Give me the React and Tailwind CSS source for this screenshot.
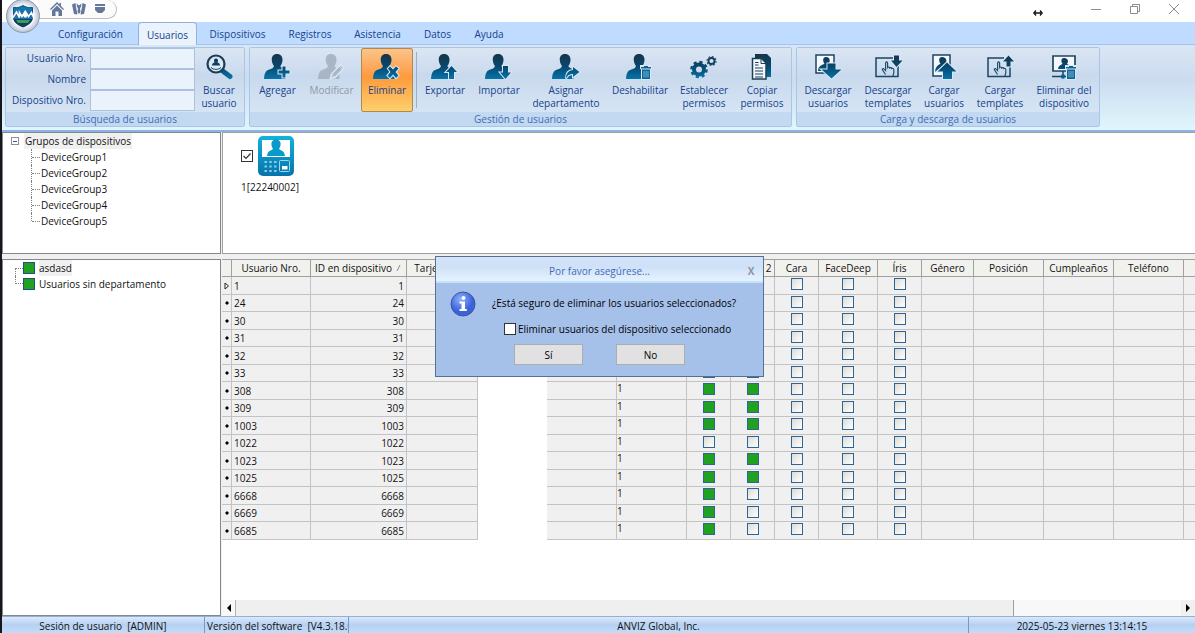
import { useState } from 'react';

const TABS = [
  { label: 'Configuración', width: 'w-[95px]' },
  { label: 'Usuarios', width: 'w-[59px]' },
  { label: 'Dispositivos', width: 'w-[81px]' },
  { label: 'Registros', width: 'w-[64px]' },
  { label: 'Asistencia', width: 'w-[71px]' },
  { label: 'Datos', width: 'w-[49px]' },
  { label: 'Ayuda', width: 'w-[54px]' },
];

const MANAGE_ACTIONS = [
  { label: 'Exportar', icon: 'export', width: 'w-[54px]' },
  { label: 'Importar', icon: 'import', width: 'w-[54px]' },
  { label: 'Asignar departamento', icon: 'assign', width: 'w-[80px]' },
  { label: 'Deshabilitar', icon: 'disable', width: 'w-[68px]' },
  { label: 'Establecer permisos', icon: 'gears', width: 'w-[60px]' },
  { label: 'Copiar permisos', icon: 'copy', width: 'w-[56px]' },
];

const TRANSFER_ACTIONS = [
  { label: 'Descargar usuarios', icon: 'downUser', width: 'w-[60px]' },
  { label: 'Descargar templates', icon: 'downTemplate', width: 'w-[60px]' },
  { label: 'Cargar usuarios', icon: 'upUser', width: 'w-[52px]' },
  { label: 'Cargar templates', icon: 'upTemplate', width: 'w-[60px]' },
  { label: 'Eliminar del dispositivo', icon: 'deleteDevice', width: 'w-[68px]' },
];

const GROUPS = ['DeviceGroup1', 'DeviceGroup2', 'DeviceGroup3', 'DeviceGroup4', 'DeviceGroup5'];

const COLUMNS = [
  { label: '', width: 'w-[10px]' },
  { label: 'Usuario Nro.', width: 'w-[79px]' },
  { label: 'ID en dispositivo', width: 'w-[96px]', sorted: true },
  { label: 'Tarjeta Nro.', width: 'w-[71px]' },
  { label: '', width: 'w-[69px]' },
  { label: '', width: 'w-[70px]' },
  { label: '', width: 'w-[70px]' },
  { label: '', width: 'w-[44px]' },
  { label: 'Huella 2', width: 'w-[44px]' },
  { label: 'Cara', width: 'w-[44px]' },
  { label: 'FaceDeep', width: 'w-[59px]' },
  { label: 'Íris', width: 'w-[44px]' },
  { label: 'Género', width: 'w-[52px]' },
  { label: 'Posición', width: 'w-[70px]' },
  { label: 'Cumpleaños', width: 'w-[70px]' },
  { label: 'Teléfono', width: 'w-[70px]' },
  { label: '', width: '' },
];

const USERS = [
  { id: 1, fp: [false, false] },
  { id: 24, fp: [false, false] },
  { id: 30, fp: [false, false] },
  { id: 31, fp: [false, false] },
  { id: 32, fp: [false, false] },
  { id: 33, fp: [false, false] },
  { id: 308, fp: [true, true] },
  { id: 309, fp: [true, true] },
  { id: 1003, fp: [true, true] },
  { id: 1022, fp: [false, false] },
  { id: 1023, fp: [true, true] },
  { id: 1025, fp: [true, true] },
  { id: 6668, fp: [true, false] },
  { id: 6669, fp: [true, false] },
  { id: 6685, fp: [true, false] },
];

const PERSON = 'M15 1c-3.6 0-5.6 2.700-5.200 6.200.3 2.800 1.200 4.600 2.200 5.800-.4 1.600-1.500 2.500-4 3.200C4.500 17.200 2.500 18.500 2 26h21.500V16.200c-3.300-.9-4.600-1.600-5.200-3.200 1.200-1.400 2-3.300 2.200-5.800C20.800 3.700 18.700 1 15 1z';

const Trash = ({ x, y }) => (
  <g transform={`translate(${x} ${y})`}>
    <path d="M-1 -1h12v4h-1v11H0V3h-1z" fill="#dbe7f5" />
    <path d="M0 1h3V0h4v1h3v1.500H0zM1 3.500h8V13H1z" fill="#0a6596" />
    <path d="M3 5v6.500M5 5v6.500M7 5v6.500" stroke="#9fc6df" strokeWidth=".8" />
  </g>
);

const Badge = ({ d }) => <path d={d} fill="url(#ink)" stroke="#dbe7f5" strokeWidth="2" paintOrder="stroke" />;

const Hand = () => (
  <path
    d="M13.500 21.500 10.500 17c-.6-1 .7-1.800 1.600-.9l1.500 1.500V10c0-1.500 2-1.500 2 0v4.500c.6-.8 2-.6 2.100.5.7-.7 2-.4 2.100.6.800-.5 2-.1 2 1v3l-.8 3.500"
    fill="none"
    stroke="#1d4f6e"
    strokeWidth="1.200"
  />
);

const Gear = ({ cx, cy, r, width, teeth }) => (
  <g fill="none" stroke="url(#ink)">
    <circle cx={cx} cy={cy} r={r} strokeWidth={width} />
    <circle cx={cx} cy={cy} r={r + width / 2 + 0.6} strokeWidth={width * 0.6} strokeDasharray={teeth} />
  </g>
);

const ICONS = {
  add: <><path d={PERSON} /><Badge d="M20.500 13.500h3V17.500h4v3h-4v4h-3v-4h-4v-3h4z" /></>,
  edit: (
    <g fill="#a9b6c6">
      <path d={PERSON} fill="#a9b6c6" />
      <path d="M14.500 25.500l1-4.500 9-9.500 3.500 3.500-9 9.500z" stroke="#dbe7f5" strokeWidth="1.500" />
      <path d="M16 21.500l3 3M23 13l3.500 3.500" stroke="#dbe7f5" />
    </g>
  ),
  remove: <><path d={PERSON} /><Badge d="M17 15.500l2-2 3 3 3-3 2.500 2-3 3.500 3 3.500-2.500 2.500-3-3.500-3 3.500-2.500-2.500 3-3.500z" /></>,
  export: <><path d={PERSON} /><Badge d="M22.500 13l5.500 6h-3v7h-5v-7h-3z" /></>,
  import: <><path d={PERSON} /><Badge d="M20 13h5v6.500h3L22.500 26 17 19.500h3z" /></>,
  assign: <><path d={PERSON} /><Badge d="M23 14l6.500 5-6.500 5v-3c-3.500 0-5.500 1.300-7 4.500 0-5 2.500-8.300 7-8.500z" /></>,
  disable: <><path d={PERSON} /><Trash x={17} y={13} /></>,
  gears: (
    <>
      <Gear cx={11} cy={16.5} r={5} width={4} teeth="3.100 2.900" />
      <Gear cx={23.500} cy={8} r={3} width={1.800} teeth="1.800 1.700" />
    </>
  ),
  copy: (
    <>
      <path d="M9 1h12l4 4v19H9z" />
      <path d="M6.500 5.500h9l4.500 4.500v16H6.500z" fill="#f4f8fc" stroke="#1b3f57" strokeWidth="1.500" />
      <path d="M15 5.500v5h5M9 15h8M9 18h8M9 21h8M9 24h8M9 9.500h3.500M9 12h3.500" fill="none" stroke="#1b3f57" />
    </>
  ),
  downUser: (
    <>
      <path d="M4 2h18v18H4z" fill="#f4f8fc" stroke="#1b4661" strokeWidth="1.500" />
      <path d="M14 4c-2 0-3 1.500-2.800 3.500.1 1.500.8 2.500 1.300 3C11.500 12 6.500 11.500 6 18h9v-7l2-1c.4-.8.7-1.800.7-2.500C17.700 5.500 16.500 4 14 4z" />
      <Badge d="M15.500 10.500h8V16.500h6L19.500 25.500 9.500 16.500h6z" />
    </>
  ),
  downTemplate: (
    <>
      <path d="M21 5H4v18.500h22V12" fill="none" stroke="#1b4661" strokeWidth="1.500" />
      <Hand />
      <Badge d="M22 2.500h5v5h3.500L24.500 14 19 7.500h3z" />
    </>
  ),
  upUser: (
    <>
      <path d="M5 2h17v21H5z" fill="#f4f8fc" stroke="#1b4661" strokeWidth="1.500" />
      <path d="M14 4c-2 0-3 1.500-2.800 3.500.1 1.500.8 2.500 1.300 3C11.500 12 7.500 12 7 19l11-9c.4-.8.4-1.800.4-2.500C18.200 5.500 16.500 4 14 4z" />
      <Badge d="M19 9.500l9.500 9H24V26h-9v-7.500H9.500z" />
    </>
  ),
  upTemplate: (
    <>
      <path d="M20 5H4v18.500h22V14" fill="none" stroke="#1b4661" strokeWidth="1.500" />
      <Hand />
      <Badge d="M24.500 2.500l5.500 6h-3.500V13.500h-4V8.500H19z" />
    </>
  ),
  deleteDevice: (
    <>
      <path d="M5 3h22v15H5z" fill="#f4f8fc" stroke="#1b4661" strokeWidth="1.700" />
      <path d="M16 5c-2 0-3 1.500-2.500 3.500.2 1 .5 1.500 1 2.200-1 1.300-4 1.300-4.500 5.300h13c0-4-3-4-4-5.300.6-.7.800-1.200 1-2.200C20.300 6.500 18 5 16 5z" />
      <path d="M4 23.500h15M15 18v4" fill="none" stroke="#1b4661" strokeWidth="1.500" />
      <circle cx="15" cy="23.500" r="2.200" fill="#0b5f8e" />
      <Trash x={18} y={13} />
    </>
  ),
};

const RibbonIcon = ({ name }) => (
  <svg viewBox="0 0 32 28" className="h-7 w-8 shrink-0" fill="url(#ink)" aria-hidden="true">
    {ICONS[name]}
  </svg>
);

const RibbonButton = ({ label, icon, width, active, disabled }) => (
  <button
    type="button"
    disabled={disabled}
    className={`flex h-16 flex-col items-center gap-[3px] rounded-xs border pt-1 leading-[13px] ${width} ${
      active
        ? 'mx-0.5 border-[#b08a4a] bg-linear-to-b from-[#fbc38a] via-[#fd9a3c] via-45% to-[#fdd06c]'
        : 'border-transparent'
    } ${disabled ? 'text-[#9298a3]' : 'text-[#15428b]'}`}
  >
    <RibbonIcon name={icon} />
    <span>{label}</span>
  </button>
);

const RibbonGroup = ({ title, children }) => (
  <section className="flex flex-col rounded-xs border border-[#a9c6e6] bg-linear-to-b from-[#dbe6f4] via-[#c9d9ed] via-35% to-[#dae9f7]">
    <div className="flex h-16 px-px">{children}</div>
    <h2 className="bg-[#c2d9f1] text-center leading-[14px] text-[#3f6cb5]">{title}</h2>
  </section>
);

const Logo = () => (
  <svg viewBox="0 0 36 36" className="absolute top-0 left-[3px] z-10 h-9 w-9" aria-hidden="true">
    <circle cx="18" cy="16" r="16.500" fill="url(#orb)" stroke="#8e9aab" />
    <path d="M8.500 7.500c4 .5 7-.5 9.500-2 2.500 1.500 5.500 2.500 9.500 2V17c0 5-4.500 8-9.500 10-5-2-9.500-5-9.500-10z" fill="#1774ae" stroke="#0d5587" />
    <path d="M8.500 19h19c-1 4-5 6.500-9.500 8-4.500-1.500-8.500-4-9.500-8z" fill="#163d60" />
    <path d="M8 17.500l3.500-5.500 3 5.500v-5l2.500 4 2.500-4v5M21 17.500v-5l2.500 4 3-4 2 5" fill="none" stroke="#fff" strokeWidth="1.600" />
    <path d="M11 20h14l-2 3H13z" fill="#35a05a" />
  </svg>
);

const TitleBar = () => (
  <header className="relative flex h-[22px] items-start bg-white">
    <div className="ml-9 flex h-[19px] w-[79px] items-center gap-2 rounded-r-full border border-t-0 border-l-0 border-[#b9bdc4] bg-[#fbfbfc] pl-3">
      <button type="button" aria-label="Inicio">
        <svg viewBox="0 0 14 14" className="h-3.5 w-3.5" fill="#637798">
          <path d="M7 0L0 7l1 1 6-6 6 6 1-1-3-3V1H9.500v1.500zM7 3.500l-5 5V14h3.500V9.500h3V14H12V8.500z" />
        </svg>
      </button>
      <button type="button" aria-label="Asistencia">
        <svg viewBox="0 0 14 14" className="h-3.5 w-3.5" fill="#637798">
          <path d="M0 2.500L3.500 1 4 5l1.500 7.500L2 12zM14 2.500L10.500 1 10 5l-1.500 7.500L12 12zM4.500 1.500L7 3.500l2.500-2L9 5l-1 1 .5 4L7 12l-1.500-2L6 6 5 5z" />
        </svg>
      </button>
      <button type="button" aria-label="Personalizar">
        <svg viewBox="0 0 12 12" className="h-3 w-3" fill="#637798">
          <path d="M1 1h10v2H1zM1 4h10v3L8 10H4L1 7z" />
        </svg>
      </button>
    </div>
    <svg viewBox="0 0 10 8" className="mt-[9px] ml-auto h-2 w-2.5" aria-hidden="true">
      <path d="M2 4h6M3 1.500L.8 4 3 6.500M7 1.500L9.200 4 7 6.500" fill="none" stroke="#111" strokeWidth="1.300" />
    </svg>
    <div className="mt-1 mr-4 ml-12 flex gap-[29px] text-[#8c8c8c]">
      <button type="button" aria-label="Minimizar">
        <svg viewBox="0 0 10 10" className="h-2.5 w-2.5" stroke="currentColor"><path d="M0 5.500h10" /></svg>
      </button>
      <button type="button" aria-label="Restaurar">
        <svg viewBox="0 0 10 10" className="h-2.5 w-2.5" fill="none" stroke="currentColor">
          <path d="M.5 2.500h7v7h-7zM2.500 2.500v-2h7v7h-2" />
        </svg>
      </button>
      <button type="button" aria-label="Cerrar">
        <svg viewBox="0 0 10 10" className="h-2.5 w-2.5" stroke="currentColor"><path d="M0 0l10 10M10 0L0 10" /></svg>
      </button>
    </div>
  </header>
);

const SearchField = ({ id, label }) => (
  <>
    <label htmlFor={id} className="text-right leading-5 text-[#15428b]">{label}</label>
    <input id={id} type="text" className="h-[21px] w-[105px] border border-[#abc1de] bg-[#eaf2fb] px-1 text-[#15428b] outline-none" />
  </>
);

const Ribbon = () => (
  <div className="flex gap-1 border-b-2 border-[#8db2e3] bg-linear-to-b from-[#dbe6f4] via-[#cbdcf0] via-40% to-[#e0f6fd] px-[3px] pt-0.5 pb-[3px]">
    <RibbonGroup title="Búsqueda de usuarios">
      <div className="grid grid-cols-[79px_105px] content-start gap-x-1">
        <SearchField id="user-no" label="Usuario Nro." />
        <SearchField id="user-name" label="Nombre" />
        <SearchField id="device-no" label="Dispositivo Nro." />
      </div>
      <button type="button" className="flex w-12 flex-col items-center gap-[3px] pt-[5px] leading-[13px] text-[#15428b]">
        <svg viewBox="0 0 28 28" className="h-7 w-7" fill="none" aria-hidden="true">
          <path d="M17 17.500l8 6" stroke="url(#ink)" strokeWidth="5" strokeLinecap="round" />
          <circle cx="11" cy="11" r="8.500" fill="#dce8f5" stroke="#173f58" strokeWidth="2.200" />
          <path d="M11 5.500c-2 0-2.500 2-1.500 4-2 .5-2.500 1.500-2.500 3h8c0-1.500-.5-2.500-2.500-3 1-2 .5-4-1.500-4z" fill="url(#ink)" />
          <path d="M6 14.500c2.500 2.500 7.500 2.500 10 0" stroke="#173f58" />
        </svg>
        <span>Buscar usuario</span>
      </button>
    </RibbonGroup>
    <RibbonGroup title="Gestión de usuarios">
      <RibbonButton label="Agregar" icon="add" width="w-[53px]" />
      <RibbonButton label="Modificar" icon="edit" width="w-[55px]" disabled />
      <RibbonButton label="Eliminar" icon="remove" width="w-[52px]" active />
      <span className="mx-px my-1 w-px bg-[#9aaec8]" />
      {MANAGE_ACTIONS.map((action) => <RibbonButton key={action.label} {...action} />)}
    </RibbonGroup>
    <RibbonGroup title="Carga y descarga de usuarios">
      {TRANSFER_ACTIONS.map((action) => <RibbonButton key={action.label} {...action} />)}
    </RibbonGroup>
  </div>
);

const DeviceTree = () => (
  <div className="h-[122px] border border-[#828790] bg-white pl-2">
    <div className="flex h-4 items-center gap-[5px]">
      <button type="button" aria-label="Contraer" className="flex h-2 w-2 items-center justify-center border border-[#919191]">
        <span className="h-px w-1 bg-[#3b5a9a]" />
      </button>
      <span className="bg-[#f0f0f0] px-px leading-4">Grupos de dispositivos</span>
    </div>
    <ul className="pl-5">
      {GROUPS.map((group) => (
        <li key={group} className="group flex h-4 items-center">
          <span className="h-full w-px border-l border-dotted border-[#808080] group-last:h-2 group-last:self-start" />
          <span className="mr-px w-2 border-t border-dotted border-[#808080]" />
          {group}
        </li>
      ))}
    </ul>
  </div>
);

const DepartmentTree = () => (
  <ul className="flex-1 border border-[#828790] bg-white">
    {['asdasd', 'Usuarios sin departamento'].map((name, i) => (
      <li key={name} className="flex h-4 items-center pl-3">
        <span className={`h-2 w-2 border-l border-dotted border-[#808080] ${i === 0 ? 'self-end border-t' : 'self-start border-b'}`} />
        <span className="mr-1 h-3 w-3 border border-[#1c5180] bg-[#21a121]" />
        <span className={i === 0 ? 'bg-[#f0f0f0] leading-4' : 'leading-4'}>{name}</span>
      </li>
    ))}
  </ul>
);

const DevicePanel = () => {
  const [checked, setChecked] = useState(true);
  return (
    <div className="h-[122px] border border-r-0 border-[#a0a0a0] bg-white pt-0.5 pl-[18px]">
      <label className="inline-flex flex-col">
        <span className="flex items-center gap-1">
          <span className="grid h-3 w-3 place-items-center">
            <input
              type="checkbox"
              checked={checked}
              onChange={(e) => setChecked(e.target.checked)}
              className="col-start-1 row-start-1 h-3 w-3 appearance-none border border-[#333] bg-white"
            />
            {checked && (
              <svg viewBox="0 0 12 12" className="pointer-events-none col-start-1 row-start-1 h-3 w-3">
                <path d="M2.500 6l2.500 2.500 4.500-5" fill="none" stroke="#333" strokeWidth="1.200" />
              </svg>
            )}
          </span>
          <svg viewBox="0 0 38 42" className="h-[42px] w-[38px]" aria-hidden="true">
            <rect x="1" y="1" width="36" height="40" rx="5" fill="url(#device)" />
            <path d="M5 5h28v17H5z" fill="#fff" />
            <path d="M19 4.500c-3.500 0-5 2.500-4.500 5.500.2 1.800.8 2.800 1.500 3.700-1.500 2-5.500 1.500-6 7.300h18c-.5-5.800-4.500-5.300-6-7.300.7-.9 1.300-1.900 1.500-3.700.5-3-1-5.500-4.500-5.500z" fill="#0a9ac9" />
            <path d="M7.500 27h12M7.500 31.500h12M7.500 36h12" stroke="#8fcde6" strokeWidth="2.200" strokeDasharray="2.400 2.400" />
            <rect x="22.500" y="25.500" width="10" height="11" rx="1" fill="none" stroke="#9ed8ee" />
            <path d="M25 31h5.500v3.500H25z" fill="#fff" />
          </svg>
        </span>
        <span className="pt-0.5 leading-4">1[22240002]</span>
      </label>
    </div>
  );
};

const Box = ({ checked = false, label }) => (
  <input
    type="checkbox"
    defaultChecked={checked}
    aria-label={label}
    className="mx-auto mt-px block h-3 w-3 appearance-none border border-[#2f6494] bg-linear-to-br from-[#dcdcd6] to-white checked:bg-[#21a121] checked:bg-none"
  />
);

const cell = 'border-r border-b border-[#c3c3c3] p-0';

const UserTable = () => (
  <table className="w-full table-fixed border-separate border-spacing-0">
    <thead>
      <tr className="h-[17px] bg-[#f1f1ee]">
        {COLUMNS.map(({ label, width, sorted }, i) => (
          <th key={i} scope="col" className={`overflow-hidden border-r border-b border-[#a0a0a0] p-0 font-normal whitespace-nowrap last:border-r-0 ${width}`}>
            <span className="flex items-center justify-center gap-1 leading-4">
              {label}
              {sorted && (
                <svg viewBox="0 0 6 6" className="h-1.5 w-1.5"><path d="M1 6l3-6" stroke="#888" /></svg>
              )}
            </span>
          </th>
        ))}
      </tr>
    </thead>
    <tbody>
      {USERS.map(({ id, fp }, i) => (
        <tr key={id} className="h-[17px] bg-[#f0f0f0] leading-4 odd:h-[18px]">
          <td className={`${cell} text-center`}>
            <svg viewBox="0 0 8 8" className="mx-auto h-2 w-2">
              {i === 0
                ? <path d="M2 1l3.500 3L2 7z" fill="#fff" stroke="#222" />
                : <path d="M4 2l2 2-2 2-2-2z" fill="#000" />}
            </svg>
          </td>
          <td className={`${cell} pl-0.5`}>{id}</td>
          <td className={`${cell} pr-0.5 text-right`}>{id}</td>
          <td className={cell} />
          <td className="bg-white p-0" />
          <td className={cell} />
          <td className={`${cell} align-top leading-[13px]`}>1</td>
          <td className={`${cell} align-top`}><Box checked={fp[0]} label={`Huella 1, ${id}`} /></td>
          <td className={`${cell} align-top`}><Box checked={fp[1]} label={`Huella 2, ${id}`} /></td>
          <td className={`${cell} align-top`}><Box label={`Cara, ${id}`} /></td>
          <td className={`${cell} align-top`}><Box label={`FaceDeep, ${id}`} /></td>
          <td className={`${cell} align-top`}><Box label={`Íris, ${id}`} /></td>
          <td className={cell} />
          <td className={cell} />
          <td className={cell} />
          <td className={cell} />
          <td className="border-b border-[#c3c3c3] p-0" />
        </tr>
      ))}
    </tbody>
  </table>
);

const ScrollBar = () => (
  <div className="mt-auto flex h-4 bg-[#f8f8f8]">
    <button type="button" aria-label="Desplazar a la izquierda" className="flex w-3.5 items-center justify-center border-r border-[#b5b5b5]">
      <svg viewBox="0 0 6 8" className="h-2 w-1.5"><path d="M5 0v8L1 4z" /></svg>
    </button>
    <div className="w-4/5 border-r border-[#a0a0a0] bg-[#efefef]" />
    <button type="button" aria-label="Desplazar a la derecha" className="ml-auto flex w-3.5 items-center justify-center bg-[#f0f0f0]">
      <svg viewBox="0 0 6 8" className="h-2 w-1.5"><path d="M1 0v8l4-4z" /></svg>
    </button>
  </div>
);

const ConfirmDialog = ({ onClose }) => (
  <div className="fixed inset-0 flex items-center justify-center pl-1">
    <div role="dialog" aria-labelledby="dialog-title" className="w-[329px] border border-[#5a6f94] bg-[#a5c1ea]">
      <div className="flex h-[26px] items-center border-b-2 border-[#c3e2fb] bg-linear-to-b from-[#d3e3f8] via-[#cfe1f8] via-40% to-[#e6f2fe] pt-1">
        <h2 id="dialog-title" className="flex-1 pl-6 text-center text-[#3f6cb5]">Por favor asegúrese...</h2>
        <button type="button" aria-label="Cerrar" onClick={onClose} className="w-6 font-bold text-[#8e949e]">X</button>
      </div>
      <div className="flex gap-4 pt-2 pb-[11px] pl-3.5 leading-4 text-black">
        <svg viewBox="0 0 26 26" className="h-[26px] w-[26px] shrink-0" aria-hidden="true">
          <circle cx="13" cy="13" r="12" fill="url(#info)" stroke="#3a55a8" />
          <circle cx="13.500" cy="7" r="2" fill="#fff" />
          <path d="M9.500 10.500H15V18h1.800v2H9.500v-2h2v-5.500h-2z" fill="#fff" />
        </svg>
        <div className="pt-1">
          <p>¿Está seguro de eliminar los usuarios seleccionados?</p>
          <label className="mt-2.5 ml-3 flex items-center gap-0.5">
            <input type="checkbox" className="h-3 w-3 appearance-none border border-[#333] bg-white" />
            Eliminar usuarios del dispositivo seleccionado
          </label>
          <div className="mt-[7px] ml-[22px] flex gap-[33px]">
            {['Sí', 'No'].map((answer) => (
              <button key={answer} type="button" onClick={onClose} className="h-[21px] w-[69px] border border-[#adadad] bg-[#e1e1e1]">
                {answer}
              </button>
            ))}
          </div>
        </div>
      </div>
    </div>
  </div>
);

const StatusBar = () => (
  <footer className="flex h-[17px] border-t border-[#8fb0dc] bg-linear-to-b from-[#dce9f9] via-[#b5d0f2] via-50% to-[#c6dcf7] leading-[18px] whitespace-pre">
    <span className="w-[203px] border-r border-[#6f9bd1] text-center">Sesión de usuario  [ADMIN]</span>
    <span className="w-36 overflow-hidden border-r border-[#6f9bd1] pl-0.5">Versión del software  [V4.3.18.0]</span>
    <span className="flex-1 border-r border-[#6f9bd1] text-center">ANVIZ Global, Inc.</span>
    <span className="w-[226px] text-center">2025-05-23 viernes 13:14:15</span>
  </footer>
);

const Gradients = () => (
  <svg className="absolute h-0 w-0" aria-hidden="true">
    <defs>
      <linearGradient id="ink" gradientUnits="userSpaceOnUse" x1="0" y1="0" x2="0" y2="27">
        <stop offset="0" stopColor="#1b3244" />
        <stop offset=".5" stopColor="#07486f" />
        <stop offset="1" stopColor="#0678ae" />
      </linearGradient>
      <linearGradient id="device" x2="0" y2="1">
        <stop stopColor="#12b3da" />
        <stop offset="1" stopColor="#0673ac" />
      </linearGradient>
      <radialGradient id="orb">
        <stop offset=".6" stopColor="#fff" />
        <stop offset="1" stopColor="#b4bfd0" />
      </radialGradient>
      <radialGradient id="info" cx=".4" cy=".3">
        <stop stopColor="#8fb0ff" />
        <stop offset="1" stopColor="#3c62d8" />
      </radialGradient>
    </defs>
  </svg>
);

const App = () => {
  const [tab, setTab] = useState('Usuarios');
  const [dialogOpen, setDialogOpen] = useState(true);

  return (
    <div className="relative flex min-h-screen flex-col overflow-hidden border-l-2 border-[#15171a] bg-[#f0f0f0] font-['Open_Sans',sans-serif] text-[10px] text-[#111]">
      <Gradients />
      <Logo />
      <TitleBar />
      <nav className="flex h-[23px] border-b border-[#a3c4ee] bg-[#bfdbff] pl-[41px]">
        {TABS.map(({ label, width }) => (
          <button
            key={label}
            type="button"
            onClick={() => setTab(label)}
            className={`h-[23px] pt-0.5 text-[#15428b] ${width} ${tab === label ? 'rounded-t-sm border border-b-0 border-[#8db2e3] bg-[#eaf2fc]' : ''}`}
          >
            {label}
          </button>
        ))}
      </nav>
      <Ribbon />

      <main className="flex flex-1 gap-px">
        <aside className="flex w-[219px] shrink-0 flex-col gap-[5px]">
          <DeviceTree />
          <DepartmentTree />
        </aside>
        <div className="flex min-w-0 flex-1 flex-col gap-[5px]">
          <DevicePanel />
          <div className="flex flex-1 flex-col border-t border-[#a0a0a0] bg-white">
            <UserTable />
            <ScrollBar />
          </div>
        </div>
      </main>
      <StatusBar />
      {dialogOpen && <ConfirmDialog onClose={() => setDialogOpen(false)} />}
    </div>
  );
};

export default App;
